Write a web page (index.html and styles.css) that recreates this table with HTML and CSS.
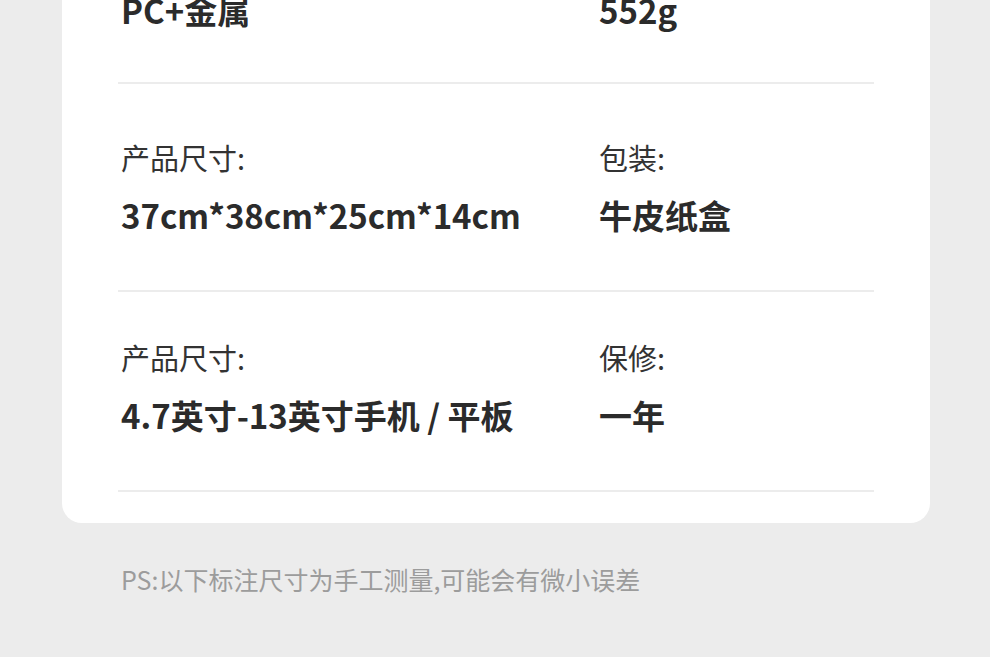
FILE: index.html
```html
<!DOCTYPE html>
<html lang="zh-CN">
<head>
    <meta charset="UTF-8">
    <meta name="viewport" content="width=device-width, initial-scale=1.0">
    <title>产品参数</title>
    <link rel="stylesheet" href="styles.css">
</head>
<body>
    <div class="spec-card">
        <div class="spec-row first">
            <div class="spec-item">
                <div class="spec-label">材质:</div>
                <div class="spec-value">PC+金属</div>
            </div>
            <div class="spec-item">
                <div class="spec-label">重量:</div>
                <div class="spec-value">552g</div>
            </div>
        </div>
        <div class="spec-row roomy">
            <div class="spec-item">
                <div class="spec-label">产品尺寸:</div>
                <div class="spec-value">37cm*38cm*25cm*14cm</div>
            </div>
            <div class="spec-item">
                <div class="spec-label">包装:</div>
                <div class="spec-value">牛皮纸盒</div>
            </div>
        </div>
        <div class="spec-row">
            <div class="spec-item">
                <div class="spec-label">产品尺寸:</div>
                <div class="spec-value">4.7英寸-13英寸手机 / 平板</div>
            </div>
            <div class="spec-item">
                <div class="spec-label">保修:</div>
                <div class="spec-value">一年</div>
            </div>
        </div>
    </div>
    <p class="note">PS:以下标注尺寸为手工测量,可能会有微小误差</p>
</body>
</html>
```

FILE: styles.css
```css
body {
    margin: 0;
    background: #ececec;
    font-family: "Noto Sans CJK SC", "Noto Sans", sans-serif;
    color: #2e2e2e;
    overflow: hidden;
}
.spec-card {
    margin: -115px 60px 0 62px;
    padding: 0 56px 31px 56px;
    background: #ffffff;
    border-radius: 0 0 20px 20px;
}
.spec-row {
    display: grid;
    grid-template-columns: 478px 1fr;
    padding: 45px 0 53px 0;
    border-bottom: 2px solid #ececec;
}
.spec-row.first {
    padding: 47px 0 50px 0;
}
.spec-row.roomy {
    padding-top: 53px;
}
.spec-item {
    display: flex;
    flex-direction: column;
    gap: 16px;
    padding-left: 3px;
}
.spec-label {
    font-size: 29px;
    line-height: 40px;
    font-weight: 400;
    color: #333333;
}
.spec-label-colon {
    margin-left: 4px;
}
.spec-value {
    font-size: 33px;
    line-height: 44px;
    font-weight: 700;
    color: #2b2b2b;
}
.note {
    margin: 40px 0 0 121px;
    font-size: 25px;
    line-height: 32px;
    color: #9c9c9c;
}
```
